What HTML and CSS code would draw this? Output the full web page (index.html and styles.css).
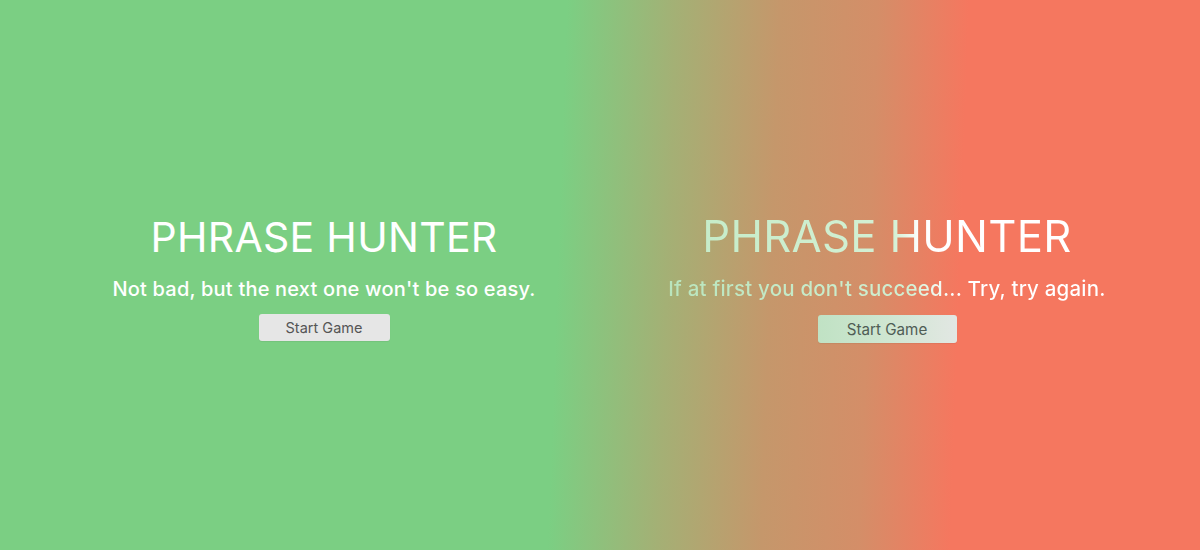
FILE: index.html
```html
<!DOCTYPE html>
<html lang="en">
<head>
<meta charset="utf-8">
<title>Phrase Hunter</title>
<link rel="stylesheet" href="styles.css">
</head>
<body>
<main class="stage">
  <section class="overlay overlay-win">
    <h1 class="title">PHRASE HUNTER</h1>
    <h2 class="message">Not bad, but the next one won't be so easy.</h2>
    <button class="btn-reset" type="button">Start Game</button>
  </section>
  <section class="overlay overlay-lose">
    <h1 class="title">PHRASE HUNTER</h1>
    <h2 class="message">If at first you don't succeed... Try, try again.</h2>
    <button class="btn-reset" type="button">Start Game</button>
  </section>
</main>
</body>
</html>
```

FILE: styles.css
```css
* { box-sizing: border-box; }

html, body {
  margin: 0;
  height: 100%;
}

body {
  font-family: "Inter", "DejaVu Sans", sans-serif;
  background: linear-gradient(92deg, #7bcf83 0%, #7bcf83 46.5%, #a4b075 55.5%, #c5976b 64%, #d48e68 72%, #f5775f 79.5%, #f5775f 100%);
  overflow: hidden;
}

.stage {
  display: grid;
  grid-template-columns: 648px 1fr;
  height: 550px;
}

.overlay {
  display: flex;
  flex-direction: column;
  align-items: center;
  justify-content: center;
  padding-top: 4px;
}

.overlay-lose {
  padding-right: 74px;
}

.title {
  margin: 0;
  font-size: 41px;
  font-weight: 400;
  color: #fff;
  letter-spacing: 0.3px;
  line-height: 1.2;
}

.message {
  margin: 14px 0 0;
  font-size: 20px;
  font-weight: 500;
  color: #fff;
  letter-spacing: 0.2px;
  line-height: 1.3;
}

.btn-reset {
  margin-top: 12px;
  width: 131px;
  height: 27px;
  border: none;
  border-radius: 3px;
  background: #e6e6e6;
  color: #555;
  font-family: inherit;
  font-size: 14.5px;
  box-shadow: 0 1px 1px rgba(0,0,0,0.06);
}

.overlay-lose .title {
  font-size: 43.7px;
  background: linear-gradient(90deg, #c6ecc9 0%, #d4f0d4 52%, #ffffff 59%, #ffffff 100%);
  -webkit-background-clip: text;
  background-clip: text;
  color: transparent;
}

.overlay-lose .message {
  font-size: 20.5px;
  letter-spacing: 0.2px;
  margin-top: 13px;
  background: linear-gradient(90deg, #b9e5bd 0%, #d0efd2 55%, #f6fbf6 63%, #ffffff 68%, #ffffff 100%);
  -webkit-background-clip: text;
  background-clip: text;
  color: transparent;
}

.overlay-lose .btn-reset {
  width: 139px;
  height: 28px;
  margin-top: 12px;
  font-size: 15.2px;
  background: linear-gradient(90deg, #c0e2c4 0%, #cfe6d1 50%, #e2e7e3 100%);
  color: #4f5d55;
}
```
